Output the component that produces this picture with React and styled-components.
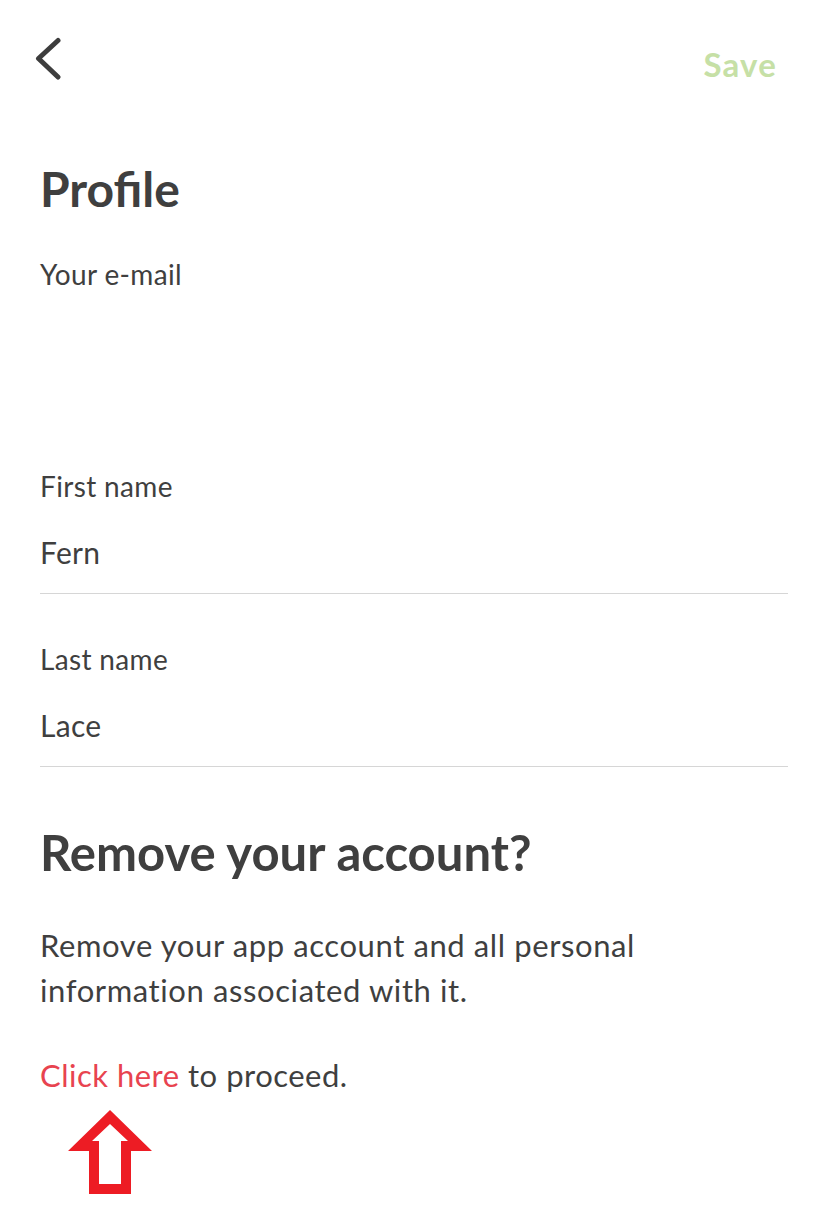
import React from "react";
import styled, { createGlobalStyle } from "styled-components";

const GlobalStyle = createGlobalStyle`
  html, body {
    margin: 0;
    padding: 0;
    background: #ffffff;
  }
  body {
    font-family: Lato, "Noto Sans", sans-serif;
    color: #3f3f3f;
  }
`;

const Screen = styled.div`
  width: 828px;
  min-height: 1208px;
  box-sizing: border-box;
  padding: 37px 40px 0 40px;
  display: flex;
  flex-direction: column;
`;

const TopBar = styled.header`
  display: flex;
  align-items: flex-start;
  justify-content: space-between;
  height: 44px;
`;

const BackButton = styled.button`
  border: none;
  background: none;
  padding: 0;
  margin-left: -5px;
  width: 30px;
  height: 44px;
  cursor: pointer;
  display: flex;
`;

const SaveButton = styled.button`
  border: none;
  background: none;
  padding: 0;
  margin: 7px 11px 0 0;
  font-family: inherit;
  font-size: 33px;
  font-weight: 700;
  color: #c6e0a6;
  letter-spacing: 1.2px;
  cursor: pointer;
`;

const Title = styled.h1`
  margin: 84px 0 0 0;
  font-size: 48px;
  font-weight: 700;
  line-height: 1;
  color: #3f3f3f;
`;

const Field = styled.div`
  display: flex;
  flex-direction: column;
  margin-top: ${(p) => p.$top}px;
  border-bottom: ${(p) => (p.$divider ? "1px solid #d6d6d6" : "none")};
  padding-bottom: ${(p) => (p.$divider ? 23 : 0)}px;
`;

const Label = styled.label`
  font-size: 28px;
  line-height: 32px;
  letter-spacing: 0.35px;
  color: #3f3f3f;
`;

const Value = styled.div`
  margin-top: 32px;
  font-size: 30px;
  line-height: 36px;
  min-height: 36px;
  letter-spacing: 0.3px;
  color: #3f3f3f;
`;

const SectionHeading = styled.h2`
  margin: 56px 0 0 0;
  font-size: 49px;
  font-weight: 700;
  line-height: 1.2;
  color: #3f3f3f;
`;

const Body = styled.p`
  margin: 41px 0 0 0;
  font-size: 31px;
  line-height: 45px;
  letter-spacing: 0.6px;
  max-width: 640px;
  color: #3f3f3f;
`;

const ProceedLine = styled.p`
  margin: 40px 0 0 0;
  font-size: 31px;
  line-height: 45px;
  letter-spacing: 0.5px;
  color: #3f3f3f;
`;

const DangerLink = styled.a`
  color: #e8434f;
  text-decoration: none;
  cursor: pointer;
`;

const Pointer = styled.svg`
  display: block;
  margin: 12px 0 0 28px;
`;

const BackIcon = () => (
  <svg width="30" height="44" viewBox="0 0 30 44">
    <polyline
      points="23,3.5 3.5,21.5 23,40"
      fill="none"
      stroke="#3d3d3d"
      strokeWidth="5"
      strokeLinecap="round"
      strokeLinejoin="round"
    />
  </svg>
);

export default function App() {
  return (
    <>
      <GlobalStyle />
      <Screen>
        <TopBar>
          <BackButton aria-label="Back">
            <BackIcon />
          </BackButton>
          <SaveButton>Save</SaveButton>
        </TopBar>

        <Title>Profile</Title>

        <Field $top={45}>
          <Label>Your e-mail</Label>
          <Value />
        </Field>

        <Field $top={112} $divider>
          <Label>First name</Label>
          <Value>Fern</Value>
        </Field>

        <Field $top={49} $divider>
          <Label>Last name</Label>
          <Value>Lace</Value>
        </Field>

        <SectionHeading>Remove your account?</SectionHeading>

        <Body>
          Remove your app account and all personal information associated with it.
        </Body>

        <ProceedLine>
          <DangerLink>Click here</DangerLink> to proceed.
        </ProceedLine>

        <Pointer width="84" height="84" viewBox="0 0 84 84">
          <path
            fillRule="evenodd"
            fill="#ed1c24"
            d="M42 0 L84 41 L63 41 L63 84 L21 84 L21 41 L0 41 Z M42 14 L24 31 L31 31 L31 74 L53 74 L53 31 L60 31 Z"
          />
        </Pointer>
      </Screen>
    </>
  );
}
